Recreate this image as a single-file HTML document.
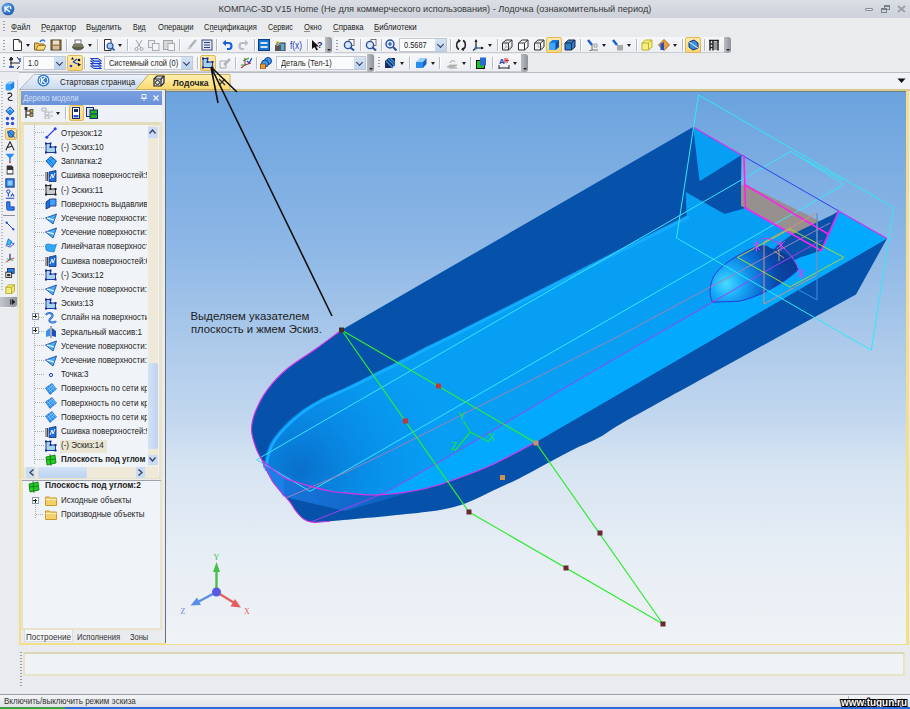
<!DOCTYPE html>
<html><head><meta charset="utf-8"><style>
*{box-sizing:border-box;margin:0;padding:0}
html,body{width:910px;height:709px;overflow:hidden;background:#e9ebee;font-family:"Liberation Sans",sans-serif;font-size:8px;color:#222}
.a{position:absolute}
.t{position:absolute;white-space:nowrap;line-height:1}
#title{left:0;top:0;width:910px;height:18px;background:linear-gradient(#dadee5,#cdd2da)}
#menu{left:0;top:18px;width:910px;height:19px;background:#e9ebed}
#tbarea{left:0;top:37px;width:910px;height:35px;background:#e9ebed}
.strip{position:absolute;background:linear-gradient(#f6f7f9,#eceef2);border-bottom:1px solid #c9cdd3;border-radius:0 2px 2px 0}
.grip{position:absolute;width:7px;background:linear-gradient(90deg,#b9bdc3,#8e939a);border-radius:0 3px 3px 0}.grip:after{content:'';position:absolute;left:1.5px;bottom:2px;width:0;height:0;border-left:2px solid transparent;border-right:2px solid transparent;border-top:2.5px solid #222}
.dots{position:absolute;width:2px;background:repeating-linear-gradient(#9aa0a8 0 1px,transparent 1px 3px)}
.sep{position:absolute;width:1px;height:12px;background:#b6bbc2;box-shadow:1px 0 0 #fff}
.dd{position:absolute;width:0;height:0;border-left:2.5px solid transparent;border-right:2.5px solid transparent;border-top:3px solid #222}
.combo{position:absolute;height:14px;background:#fafbfc;border:1px solid #c3c8cf;font-size:8.5px;padding:2px 0 0 5px}
.cbtn{position:absolute;top:0;right:0;width:11px;height:12px;background:linear-gradient(#d5e4f6,#bcd2ee);}
.cbtn:after{content:"";position:absolute;left:2.5px;top:3px;width:4px;height:4px;border-right:1.5px solid #335;border-bottom:1.5px solid #335;transform:rotate(45deg)}
.hl{position:absolute;background:linear-gradient(#fde9a8,#f9d57a);border:1px solid #e2b95a;border-radius:2px}
#tabs{left:19px;top:72px;width:891px;height:19px;background:#f0f2f5;border-top:1px solid #b9bdc3;border-bottom:2px solid #d8c98f}
#vtb{left:0;top:80px;width:18px;height:228px;background:#eef0f3;border-right:1px solid #d0d4da}
#tree{left:19px;top:90px;width:147px;height:555px;background:#e9ebee;border-left:2px solid #f1dc8c;border-bottom:2px solid #f1dc8c}
#vp{left:166px;top:91px;width:740px;height:553px;background:linear-gradient(#6ba3de 0%,#8db7e6 28%,#b2cdeb 49%,#c2d7ef 59%,#d7e4f2 68%,#e8eef5 85%,#eff2f6 100%)}
#cmd{left:23px;top:652px;width:882px;height:24px;background:#f0f3f6;border:2px solid #e8e2c8;border-top-color:#ddd6b6}
#status{left:0;top:694px;width:910px;height:15px;background:linear-gradient(#f4f5f7,#dcdfe3);border-top:1px solid #9da2a8}
.menu{font-size:8.2px;top:23.5px;color:#1a1a1a}
.ti{font-size:8.2px;color:#1a1a1a}
</style></head><body>
<div id="title" class="a"></div>
<svg class="a" style="left:1px;top:2px" width="14" height="14" viewBox="0 0 14 14"><defs><radialGradient id="lg" cx="0.4" cy="0.35" r="0.7"><stop offset="0" stop-color="#6fb4f0"/><stop offset="1" stop-color="#1456b0"/></radialGradient></defs><circle cx="7" cy="7" r="6.3" fill="url(#lg)"/><path d="M4,4 V10 M4,7 L8,4 M5,7 L9,10 M9,4 L10,7" stroke="#fff" stroke-width="1.2" fill="none"/></svg>
<div class="t" style="left:218.50px;top:4.61px;font-size:9.2px;color:#383838;">КОМПАС-3D V15 Home (Не для коммерческого использования) - Лодочка (ознакомительный период)</div>
<div class="a" style="left:865px;top:8px;width:8px;height:3px;border:1px solid #858b93;background:#e6e9ee;border-radius:1px"></div>
<div class="a" style="left:884px;top:5px;width:6px;height:5px;border:1px solid #7a8088;border-top-width:2px"></div><div class="a" style="left:881px;top:8px;width:6px;height:5px;border:1px solid #7a8088;border-top-width:2px;background:#d3d7de"></div>
<svg class="a" style="left:897px;top:5px" width="9" height="8"><path d="M1,1 L8,7 M8,1 L1,7" stroke="#9aa0a8" stroke-width="1.8"/></svg>
<div id="menu" class="a"></div>
<div class="dots" style="left:3px;top:21px;height:12px"></div>
<div class="t" style="left:11.40px;top:22.68px;font-size:9.0px;transform:scaleX(0.8768);transform-origin:left top;">Файл</div>
<div class="t" style="left:40.70px;top:22.68px;font-size:9.0px;transform:scaleX(0.9061);transform-origin:left top;">Редактор</div>
<div class="t" style="left:86.40px;top:22.68px;font-size:9.0px;transform:scaleX(0.8575);transform-origin:left top;">Выделить</div>
<div class="t" style="left:133.40px;top:22.68px;font-size:9.0px;transform:scaleX(0.7739);transform-origin:left top;">Вид</div>
<div class="t" style="left:157.80px;top:22.68px;font-size:9.0px;transform:scaleX(0.8456);transform-origin:left top;">Операции</div>
<div class="t" style="left:204.30px;top:22.68px;font-size:9.0px;transform:scaleX(0.8340);transform-origin:left top;">Спецификация</div>
<div class="t" style="left:268.00px;top:22.68px;font-size:9.0px;transform:scaleX(0.8080);transform-origin:left top;">Сервис</div>
<div class="t" style="left:304.30px;top:22.68px;font-size:9.0px;transform:scaleX(0.8416);transform-origin:left top;">Окно</div>
<div class="t" style="left:332.90px;top:22.68px;font-size:9.0px;transform:scaleX(0.8696);transform-origin:left top;">Справка</div>
<div class="t" style="left:374.40px;top:22.68px;font-size:9.0px;transform:scaleX(0.8737);transform-origin:left top;">Библиотеки</div>
<div class="a" style="left:11.4px;top:30.8px;width:6.0px;height:1px;background:#8a8a8a"></div>
<div class="a" style="left:40.7px;top:30.8px;width:5.4px;height:1px;background:#8a8a8a"></div>
<div class="a" style="left:91.5px;top:30.8px;width:5.5px;height:1px;background:#8a8a8a"></div>
<div class="a" style="left:138.0px;top:30.8px;width:3.9px;height:1px;background:#8a8a8a"></div>
<div class="a" style="left:184.9px;top:30.8px;width:4.3px;height:1px;background:#8a8a8a"></div>
<div class="a" style="left:209.7px;top:30.8px;width:4.1px;height:1px;background:#8a8a8a"></div>
<div class="a" style="left:273.3px;top:30.8px;width:4.0px;height:1px;background:#8a8a8a"></div>
<div class="a" style="left:304.3px;top:30.8px;width:5.9px;height:1px;background:#8a8a8a"></div>
<div class="a" style="left:332.9px;top:30.8px;width:5.7px;height:1px;background:#8a8a8a"></div>
<div class="a" style="left:374.4px;top:30.8px;width:5.2px;height:1px;background:#8a8a8a"></div>
<div id="tbarea" class="a"></div>
<div class="strip" style="left:0;top:37px;width:326px;height:16px"></div>
<div class="grip" style="left:325px;top:37px;height:16px"></div>
<div class="strip" style="left:334px;top:37px;width:391px;height:16px"></div>
<div class="grip" style="left:724px;top:37px;height:16px"></div>
<div class="dots" style="left:3px;top:40px;height:11px"></div>
<div class="dots" style="left:336px;top:40px;height:11px"></div>
<div class="strip" style="left:0;top:54px;width:368px;height:18px"></div>
<div class="grip" style="left:367px;top:54px;height:18px"></div>
<div class="strip" style="left:375px;top:54px;width:147px;height:18px"></div>
<div class="grip" style="left:521px;top:54px;height:18px"></div>
<div class="dots" style="left:3px;top:57px;height:12px"></div>
<div class="dots" style="left:378px;top:57px;height:12px"></div>
<svg class="a" style="left:11px;top:39px" width="12" height="12" viewBox="0 0 12 12"><path d="M2.5,0.5 H8 L10.5,3 V11.5 H2.5 Z" fill="#fff" stroke="#333"/><path d="M8,0.5 V3 H10.5" fill="none" stroke="#333"/></svg>
<svg class="a" style="left:34px;top:39px" width="12" height="12" viewBox="0 0 12 12"><path d="M0.5,4 H4 L5,5 H10 V11 H0.5 Z" fill="#e9c25a" stroke="#8a6a20"/><path d="M2,11 L4,6.5 H12 L10,11 Z" fill="#f7dc82" stroke="#8a6a20" stroke-width="0.8"/><path d="M6,3 C7,0.5 10,0.5 11,2.5" fill="none" stroke="#2a6ee8" stroke-width="1.5"/></svg>
<svg class="a" style="left:49.5px;top:39px" width="12" height="12" viewBox="0 0 12 12"><rect x="1" y="1" width="10" height="10" fill="#a4804a" stroke="#4a3a20"/><rect x="3" y="1.5" width="6" height="4" fill="#e8e0d0"/><rect x="3" y="7" width="6" height="3.5" fill="#d0c0a0"/></svg>
<svg class="a" style="left:72px;top:39px" width="12" height="12" viewBox="0 0 12 12"><rect x="3" y="1" width="6" height="4" fill="#fff" stroke="#555" stroke-width="0.8"/><ellipse cx="6" cy="8" rx="5.5" ry="3" fill="#5e5f48" stroke="#333" stroke-width="0.6"/><rect x="1" y="5" width="10" height="3" fill="#7a7b60"/></svg>
<svg class="a" style="left:102.5px;top:39px" width="12" height="12" viewBox="0 0 12 12"><path d="M1.5,0.5 H8 V11.5 H1.5 Z" fill="#fff" stroke="#333"/><circle cx="7" cy="7" r="3" fill="#a8c8f0" stroke="#2050b0" stroke-width="1.2"/><path d="M9,9 L11.5,11.5" stroke="#2050b0" stroke-width="1.6"/></svg>
<svg class="a" style="left:133px;top:39px" width="12" height="12" viewBox="0 0 12 12"><path d="M3,1 L8,9 M9,1 L4,9" stroke="#a0a4aa" stroke-width="1"/><circle cx="3.5" cy="10" r="1.5" fill="none" stroke="#a0a4aa"/><circle cx="8.5" cy="10" r="1.5" fill="none" stroke="#a0a4aa"/></svg>
<svg class="a" style="left:148px;top:39px" width="12" height="12" viewBox="0 0 12 12"><rect x="0.5" y="1.5" width="6" height="7" fill="#eee" stroke="#a8acb2"/><rect x="4.5" y="4.5" width="6.5" height="7" fill="#f4f4f4" stroke="#a8acb2"/></svg>
<svg class="a" style="left:163px;top:39px" width="12" height="12" viewBox="0 0 12 12"><rect x="0.5" y="1.5" width="9" height="9" fill="#d8d8d8" stroke="#a0a4aa"/><rect x="5" y="4.5" width="6.5" height="7" fill="#f4f4f4" stroke="#a8acb2"/></svg>
<svg class="a" style="left:186px;top:39px" width="12" height="12" viewBox="0 0 12 12"><path d="M1,11 L3,7 L6,9 Z" fill="#c8c8c8"/><path d="M4,8 L10,1" stroke="#b0b4b8" stroke-width="2.5"/></svg>
<svg class="a" style="left:201px;top:39px" width="12" height="12" viewBox="0 0 12 12"><rect x="1" y="1" width="10" height="10" fill="#dfe6f0" stroke="#354a7a"/><path d="M3,3.5 H9 M3,6 H9 M3,8.5 H9" stroke="#2a3f80" stroke-width="1.2"/></svg>
<svg class="a" style="left:222px;top:39px" width="12" height="12" viewBox="0 0 12 12"><path d="M3,4 H7 C10,4 10.5,10 7,10 H5" fill="none" stroke="#1a5ee0" stroke-width="2.2"/><path d="M0.5,4 L4,0.8 V7.2 Z" fill="#1a5ee0"/></svg>
<svg class="a" style="left:236.5px;top:39px" width="12" height="12" viewBox="0 0 12 12"><path d="M9,4 H5 C2,4 1.5,10 5,10 H7" fill="none" stroke="#b8bcc2" stroke-width="2.2"/><path d="M11.5,4 L8,0.8 V7.2 Z" fill="#b8bcc2"/></svg>
<svg class="a" style="left:258px;top:39px" width="12" height="12" viewBox="0 0 12 12"><rect x="0.5" y="0.5" width="11" height="11" fill="#1a74d0" stroke="#0a3a80"/><rect x="2.5" y="3" width="7" height="2" fill="#cfe6ff"/><rect x="2.5" y="7" width="7" height="2" fill="#cfe6ff"/></svg>
<svg class="a" style="left:273.5px;top:39px" width="12" height="12" viewBox="0 0 12 12"><rect x="3" y="4" width="8" height="8" fill="#60a8d0" stroke="#333"/><rect x="1" y="6" width="6" height="6" fill="#555"/><text x="1" y="7" font-size="8" font-weight="700" fill="#e8d020" font-family="Liberation Sans">?</text></svg>
<svg class="a" style="left:290px;top:39px" width="12" height="12" viewBox="0 0 12 12"><text x="0" y="10" font-size="10" fill="#1a3ab0" font-family="Liberation Sans" textLength="12" lengthAdjust="spacingAndGlyphs">f(x)</text></svg>
<svg class="a" style="left:311px;top:39px" width="12" height="12" viewBox="0 0 12 12"><path d="M1,1 L1,10 L3.5,8 L5.5,11.5 L7,10.5 L5,7.5 H8 Z" fill="#111"/><text x="6" y="9" font-size="9" font-weight="700" fill="#1a2a70" font-family="Liberation Sans">?</text></svg>
<svg class="a" style="left:343px;top:39px" width="12" height="12" viewBox="0 0 12 12"><rect x="6" y="0.5" width="5" height="6" fill="#fff" stroke="#555" stroke-width="0.8"/><circle cx="5" cy="6" r="3.6" fill="#d8e8f8" stroke="#2a50a0" stroke-width="1.4"/><path d="M7.5,8.5 L11,11.5" stroke="#2a50a0" stroke-width="2"/></svg>
<svg class="a" style="left:365px;top:39px" width="12" height="12" viewBox="0 0 12 12"><rect x="6" y="0.5" width="5" height="6" fill="#fff" stroke="#555" stroke-width="0.8"/><circle cx="5" cy="6" r="3.6" fill="#d8e8f8" stroke="#2a50a0" stroke-width="1.4"/><path d="M7.5,8.5 L11,11.5" stroke="#2a50a0" stroke-width="2"/></svg>
<svg class="a" style="left:385px;top:39px" width="12" height="12" viewBox="0 0 12 12"><circle cx="5" cy="5" r="4" fill="#d8e8f8" stroke="#2a50a0" stroke-width="1.4"/><path d="M8,8 L11.5,11.5" stroke="#2a50a0" stroke-width="2"/><path d="M3,5 H7 M5,3 V7" stroke="#2a50a0" stroke-width="1.2"/></svg>
<svg class="a" style="left:454.5px;top:39px" width="12" height="12" viewBox="0 0 12 12"><path d="M5,1.5 C1,2 0.5,9 4,10.5 M7,10.5 C11,10 11.5,3 8,1.5" fill="none" stroke="#222" stroke-width="1.5"/><path d="M3,0 L6,1.5 L3.5,4 Z M9,12 L6,10.5 L8.5,8 Z" fill="#222"/></svg>
<svg class="a" style="left:472px;top:39px" width="12" height="12" viewBox="0 0 12 12"><path d="M4,1 V9 H11 M4,9 L1,11.5" fill="none" stroke="#222" stroke-width="1.2"/><path d="M4,0 L2.5,3 H5.5 Z M12,9 L9,7.5 V10.5 Z" fill="#222"/><circle cx="4" cy="9" r="1.4" fill="#3060d0"/></svg>
<svg class="a" style="left:501px;top:39px" width="12" height="12" viewBox="0 0 12 12"><path d="M1.5,4 L5,1 H11 V8 L7.5,11 H1.5 Z M1.5,4 H7.5 V11 M7.5,4 L11,1" fill="none" stroke="#333"/><path d="M1.5,11 L5,8 H11 M5,1 V8" fill="none" stroke="#888" stroke-width="0.6"/></svg>
<svg class="a" style="left:517px;top:39px" width="12" height="12" viewBox="0 0 12 12"><path d="M1.5,4 L5,1 H11 V8 L7.5,11 H1.5 Z M1.5,4 H7.5 V11 M7.5,4 L11,1" fill="#fff" stroke="#333"/></svg>
<svg class="a" style="left:533px;top:39px" width="12" height="12" viewBox="0 0 12 12"><path d="M1.5,4 L5,1 H11 V8 L7.5,11 H1.5 Z M1.5,4 H7.5 V11 M7.5,4 L11,1" fill="#f0f0f0" stroke="#333"/><path d="M5,1 V8 H11" fill="none" stroke="#999" stroke-width="0.6"/></svg>
<svg class="a" style="left:563.5px;top:39px" width="12" height="12" viewBox="0 0 12 12"><path d="M1,4 L4.5,1 H11 V8 L7.5,11 H1 Z" fill="#3080c8" stroke="#1a2a50"/><path d="M1,4 H7.5 V11" fill="none" stroke="#1a2a50"/><path d="M7.5,4 L11,1" stroke="#1a2a50"/></svg>
<svg class="a" style="left:586.5px;top:39px" width="12" height="12" viewBox="0 0 12 12"><path d="M1,1 L5,6" stroke="#1a60d0" stroke-width="2.5"/><path d="M5,6 V11 H11 M5,11 L2,12" fill="none" stroke="#555" stroke-width="0.8"/><rect x="7" y="5" width="3" height="3" fill="none" stroke="#888" stroke-width="0.8"/></svg>
<svg class="a" style="left:612px;top:39px" width="12" height="12" viewBox="0 0 12 12"><path d="M1,1 L5,6" stroke="#1a60d0" stroke-width="2.5"/><rect x="5" y="6" width="6" height="5.5" fill="#aaa"/></svg>
<svg class="a" style="left:641px;top:39px" width="12" height="12" viewBox="0 0 12 12"><path d="M1,4 L4.5,1 H11 V8 L7.5,11 H1 Z" fill="#f6f08a" stroke="#c0b020"/><path d="M1,4 H7.5 V11 M7.5,4 L11,1" fill="none" stroke="#c0b020"/></svg>
<svg class="a" style="left:658px;top:39px" width="12" height="12" viewBox="0 0 12 12"><path d="M6,0.5 L11.5,6 L6,11.5 L0.5,6 Z" fill="#f0a030" stroke="#905010" stroke-width="0.8"/><path d="M2.5,11 V5 L6,3 V11 Z" fill="#2050d0"/></svg>
<svg class="a" style="left:708px;top:39px" width="12" height="12" viewBox="0 0 12 12"><path d="M1,1.5 H11 M2,1.5 V11.5 M5,1.5 V11.5 M10,1.5 V11.5 M2,5 H5 M2,8.5 H5" stroke="#222" stroke-width="1.5" fill="none"/><rect x="6" y="3" width="3" height="8" fill="#999"/></svg>
<div class="hl" style="left:546px;top:37px;width:16px;height:16px"></div>
<svg class="a" style="left:548px;top:39px" width="12" height="12" viewBox="0 0 12 12"><path d="M1,4 L4.5,1 H11 V8 L7.5,11 H1 Z" fill="#1a7ce0"/><path d="M1,4 H7.5 V11 H1 Z" fill="#40a8f8"/><path d="M7.5,4 L11,1 V8 L7.5,11 Z" fill="#1050b0"/></svg>
<div class="hl" style="left:685px;top:37px;width:16px;height:16px"></div>
<svg class="a" style="left:687px;top:39px" width="12" height="12" viewBox="0 0 12 12"><path d="M2,3 L7,1 L11,4 V9 L6,11 L2,8 Z" fill="#3a90e0" stroke="#10306a"/><path d="M2,3 L11,9" stroke="#f0f0f0" stroke-width="1"/></svg>
<div class="dd" style="left:25.5px;top:44px"></div>
<div class="dd" style="left:87.5px;top:44px"></div>
<div class="dd" style="left:117.5px;top:44px"></div>
<div class="dd" style="left:487.5px;top:44px"></div>
<div class="dd" style="left:602.0px;top:44px"></div>
<div class="dd" style="left:627.0px;top:44px"></div>
<div class="dd" style="left:673.2px;top:44px"></div>
<div class="sep" style="left:65.5px;top:39px;height:12px"></div>
<div class="sep" style="left:97.0px;top:39px;height:12px"></div>
<div class="sep" style="left:127.0px;top:39px;height:12px"></div>
<div class="sep" style="left:179.0px;top:39px;height:12px"></div>
<div class="sep" style="left:216.0px;top:39px;height:12px"></div>
<div class="sep" style="left:254.0px;top:39px;height:12px"></div>
<div class="sep" style="left:306.5px;top:39px;height:12px"></div>
<div class="sep" style="left:360.0px;top:39px;height:12px"></div>
<div class="sep" style="left:381.0px;top:39px;height:12px"></div>
<div class="sep" style="left:450.0px;top:39px;height:12px"></div>
<div class="sep" style="left:497.0px;top:39px;height:12px"></div>
<div class="sep" style="left:580.0px;top:39px;height:12px"></div>
<div class="sep" style="left:636.0px;top:39px;height:12px"></div>
<div class="sep" style="left:682.0px;top:39px;height:12px"></div>
<div class="sep" style="left:704.0px;top:39px;height:12px"></div>
<div class="combo" style="left:399px;top:38px;width:48px;height:14px"><div class="cbtn"></div></div><div class="a" style="left:400px;top:38px;width:36px;height:14px;overflow:hidden"><div class="t" style="left:4.00px;top:2.98px;font-size:9.0px;transform:scaleX(0.8267);transform-origin:left top;">0.5687</div></div>
<svg class="a" style="left:9px;top:57px" width="12" height="12" viewBox="0 0 12 12"><path d="M2,11 V2 M2,0 L0.5,3 H3.5 Z M2,0 L4,2" fill="#222" stroke="#222" stroke-width="1"/><path d="M8,0 L10.5,3 M8,12 L10.5,9 M1,6 L11,6" stroke="#222" fill="none"/><path d="M0,10 H5 M11,1 V5" stroke="#1a40c0" stroke-width="1.3"/></svg>
<svg class="a" style="left:90px;top:57px" width="12" height="12" viewBox="0 0 12 12"><path d="M0.5,9 L4,11.5 H11.5 L8,9 Z" fill="#c8dcf8" stroke="#1a3ad0"/><path d="M0.5,6.5 L4,9 H11.5 L8,6.5 Z" fill="#c8dcf8" stroke="#1a3ad0"/><path d="M0.5,4 L4,6.5 H11.5 L8,4 Z" fill="#c8dcf8" stroke="#1a3ad0"/><path d="M0.5,1.5 L4,4 H11.5 L8,1.5 Z" fill="#c8dcf8" stroke="#1a3ad0"/></svg>
<svg class="a" style="left:218.5px;top:57px" width="12" height="12" viewBox="0 0 12 12"><path d="M1,4 H7 V11 H1 Z" fill="#f4f4f4" stroke="#a0a4aa"/><path d="M5,8 L11,2" stroke="#b0b4b8" stroke-width="2.5"/></svg>
<svg class="a" style="left:239.5px;top:57px" width="12" height="12" viewBox="0 0 12 12"><path d="M5,1 V8 L1,11 M5,8 L11,6" fill="none" stroke="#c03030" stroke-width="1.1"/><path d="M1,8 H6 M3,4 L9,1" fill="none" stroke="#20a040" stroke-width="1.1"/><path d="M7,4 L9,6 L12,1" fill="none" stroke="#1a40d0" stroke-width="1.3"/></svg>
<svg class="a" style="left:260px;top:57px" width="12" height="12" viewBox="0 0 12 12"><circle cx="8" cy="4" r="3.5" fill="#3a9ae8" stroke="#1a3a90"/><circle cx="5" cy="6.5" r="3.5" fill="#3a9ae8" stroke="#1a3a90"/><rect x="0.5" y="7" width="5" height="5" fill="#e89a40" stroke="#905010" stroke-width="0.8"/></svg>
<svg class="a" style="left:384px;top:57px" width="12" height="12" viewBox="0 0 12 12"><path d="M1,4 L4.5,1 H11 V8 L7.5,11 H1 Z" fill="#1a2a60"/><path d="M2,4 L9,11 M4,2 L11,9 M6,1 L11,6" stroke="#3a9ae0" stroke-width="1.3"/></svg>
<svg class="a" style="left:415px;top:57px" width="12" height="12" viewBox="0 0 12 12"><path d="M1,5 L5,1 H11.5 L8,5 Z" fill="#9ad0ff"/><path d="M1,5 H8 V11 H1 Z" fill="#2a8ef0"/><path d="M8,5 L11.5,1 V7 L8,11 Z" fill="#1a60c0"/></svg>
<svg class="a" style="left:446px;top:57px" width="12" height="12" viewBox="0 0 12 12"><path d="M4,6 C5,3 8,3 9,5" fill="none" stroke="#999"/><path d="M1,10 L4,8 H11 L8,10 Z" fill="#bbb" stroke="#999" stroke-width="0.6"/><path d="M3,11 H11" stroke="#999"/></svg>
<svg class="a" style="left:475px;top:57px" width="12" height="12" viewBox="0 0 12 12"><rect x="1" y="3" width="9" height="9" fill="#111"/><rect x="2" y="4" width="7" height="7" fill="#20c020"/><rect x="5" y="0.5" width="6" height="8" fill="#2a6ad0"/></svg>
<svg class="a" style="left:498px;top:57px" width="12" height="12" viewBox="0 0 12 12"><path d="M1,11 H11 M1,8 V12 M11,8 V12" stroke="#222"/><text x="1" y="7" font-size="8" font-weight="700" fill="#2040c0" font-family="Liberation Sans">A</text><path d="M7,1 V6 M9,1 V6 M7,3.5 H11" stroke="#d02020"/></svg>
<div class="hl" style="left:67px;top:55px;width:16px;height:16px"></div>
<svg class="a" style="left:69px;top:57px" width="12" height="12" viewBox="0 0 12 12"><path d="M4,5 L8,2 M4,5 L11,8" stroke="#1a40d0" stroke-width="1.3"/><path d="M3.5,0 L5,2.5 L2,2.5 Z M9,6 L12,7.5 L9,9.5 Z" fill="#111"/><circle cx="2" cy="9" r="1.3" fill="#1a40d0"/><circle cx="10" cy="3" r="1.3" fill="#111"/></svg>
<div class="hl" style="left:200px;top:55px;width:16px;height:16px"></div>
<svg class="a" style="left:202px;top:57px" width="12" height="12" viewBox="0 0 12 12"><path d="M1,1.5 H5.5 V5 H10.5 V10.5 H1 Z" fill="#a8d4e8" stroke="#1a3ab0" stroke-width="1"/><g fill="#1a2a90"><rect x="0" y="0.5" width="2" height="2"/><rect x="4.5" y="0.5" width="2" height="2"/><rect x="4.5" y="4" width="2" height="2"/><rect x="9.5" y="4" width="2" height="2"/><rect x="0" y="9.5" width="2" height="2"/><rect x="9.5" y="9.5" width="2" height="2"/></g></svg>
<div class="sep" style="left:84.4px;top:57px;height:12px"></div>
<div class="sep" style="left:197.0px;top:57px;height:12px"></div>
<div class="sep" style="left:235.0px;top:57px;height:12px"></div>
<div class="sep" style="left:256.0px;top:57px;height:12px"></div>
<div class="sep" style="left:409.0px;top:57px;height:12px"></div>
<div class="sep" style="left:439.0px;top:57px;height:12px"></div>
<div class="sep" style="left:470.0px;top:57px;height:12px"></div>
<div class="sep" style="left:492.0px;top:57px;height:12px"></div>
<div class="dd" style="left:400.0px;top:62px"></div>
<div class="dd" style="left:430.5px;top:62px"></div>
<div class="dd" style="left:461.5px;top:62px"></div>
<div class="dd" style="left:513.0px;top:62px"></div>
<div class="combo" style="left:23px;top:56px;width:43px;height:14px"><div class="cbtn"></div></div><div class="a" style="left:24px;top:56px;width:31px;height:14px;overflow:hidden"><div class="t" style="left:4.00px;top:2.98px;font-size:9.0px;transform:scaleX(0.8267);transform-origin:left top;">1.0</div></div>
<div class="combo" style="left:104px;top:56px;width:89px;height:14px"><div class="cbtn"></div></div><div class="a" style="left:105px;top:56px;width:77px;height:14px;overflow:hidden"><div class="t" style="left:4.00px;top:2.98px;font-size:9.0px;transform:scaleX(0.8267);transform-origin:left top;">Системный слой (0)</div></div>
<div class="combo" style="left:275.5px;top:56px;width:90.5px;height:14px"><div class="cbtn"></div></div><div class="a" style="left:276.5px;top:56px;width:78.5px;height:14px;overflow:hidden"><div class="t" style="left:4.00px;top:2.98px;font-size:9.0px;transform:scaleX(0.8267);transform-origin:left top;">Деталь (Тел-1)</div></div>
<div id="tabs" class="a"></div>
<svg class="a" style="left:19px;top:72px" width="220" height="18" viewBox="0 0 220 18"><defs><linearGradient id="tg1" x1="0" y1="0" x2="0" y2="1"><stop offset="0" stop-color="#eef3fa"/><stop offset="1" stop-color="#c9d9ee"/></linearGradient><linearGradient id="tg2" x1="0" y1="0" x2="0" y2="1"><stop offset="0" stop-color="#fff0b0"/><stop offset="1" stop-color="#fbd870"/></linearGradient></defs><path d="M0.5,17.5 L15,2.5 H129.6 L117,17.5 Z" fill="url(#tg1)" stroke="#a9b6c8"/><path d="M117,17.5 L129.6,2.5 H211 V17.5 Z" fill="url(#tg2)" stroke="#c8b060"/></svg>
<svg class="a" style="left:37px;top:74px" width="13" height="13" viewBox="0 0 13 13"><circle cx="6.5" cy="6.5" r="6" fill="#2a7ad8"/><circle cx="6.5" cy="6.5" r="4.2" fill="none" stroke="#fff" stroke-width="1"/><path d="M4.5,3.5 V9.5 M4.5,6.5 L8,3.5 M5.5,6.5 L8.5,9.5" stroke="#fff" stroke-width="1.2" fill="none"/></svg>
<div class="t" style="left:59.50px;top:77.68px;font-size:9.0px;transform:scaleX(0.8814);transform-origin:left top;">Стартовая страница</div>
<svg class="a" style="left:153px;top:75px" width="12" height="12" viewBox="0 0 12 12"><path d="M1,4 L4,1 H11 V8 L8,11 H1 Z" fill="#ddd" stroke="#222" stroke-width="1.2"/><path d="M1,4 H8 V11 M8,4 L11,1" fill="none" stroke="#222" stroke-width="1.2"/><circle cx="4.5" cy="7.5" r="2" fill="none" stroke="#222"/></svg>
<div class="t" style="left:172.80px;top:78.92px;font-size:8.6px;font-weight:700;">Лодочка</div>
<svg class="a" style="left:218px;top:78px" width="8" height="8" viewBox="0 0 8 8"><path d="M1,1 L7,7 M7,1 L1,7" stroke="#333" stroke-width="1.4"/></svg>
<svg class="a" style="left:897px;top:78px" width="9" height="6" viewBox="0 0 9 6"><path d="M0.5,0.5 H8.5 L4.5,5 Z" fill="#111"/></svg>
<div id="vtb" class="a"></div>
<div class="a" style="left:1px;top:82px;width:2px;height:210px;background:repeating-linear-gradient(#b8bcc2 0 1px,transparent 1px 3px)"></div>
<svg class="a" style="left:5px;top:81px" width="10" height="10" viewBox="0 0 12 12"><path d="M1,4 L5,1 H11 V8 L7,11 H1 Z" fill="#1a80e8"/><path d="M1,4 H7 V11 H1 Z" fill="#2aa0ff"/><path d="M1,4 L5,1 H11 L7,4 Z" fill="#8ad0ff"/></svg>
<svg class="a" style="left:5px;top:92px" width="10" height="10" viewBox="0 0 12 12"><path d="M3,2 C8,0 10,4 6,6 C2,8 4,11 9,10" fill="none" stroke="#222" stroke-width="1.3"/></svg>
<svg class="a" style="left:5px;top:106px" width="10" height="10" viewBox="0 0 12 12"><path d="M6,1 L11,6 L6,11 L1,6 Z" fill="#2a90f0" stroke="#1a4ab0"/><path d="M3,6 L6,3 L9,6" stroke="#fff" fill="none"/></svg>
<svg class="a" style="left:5px;top:116px" width="10" height="10" viewBox="0 0 12 12"><circle cx="3" cy="3" r="2" fill="#2a50e0"/><circle cx="9" cy="3" r="2" fill="#2a50e0"/><circle cx="3" cy="9" r="2" fill="#2a50e0"/><circle cx="9" cy="9" r="2" fill="#2a50e0"/></svg>
<svg class="a" style="left:5px;top:141px" width="10" height="10" viewBox="0 0 12 12"><path d="M1,11 L6,1 L11,11 M2,8 L9,6" fill="none" stroke="#222" stroke-width="1.3"/></svg>
<svg class="a" style="left:5px;top:153px" width="10" height="10" viewBox="0 0 12 12"><path d="M0.5,1 H11.5 L7,6 V9 L5,11 V6 Z" fill="#2a90f0"/><rect x="5" y="10" width="2" height="2" fill="#e03020"/></svg>
<svg class="a" style="left:5px;top:165px" width="10" height="10" viewBox="0 0 12 12"><path d="M2,0.5 H8 L10,2.5 V11.5 H2 Z" fill="#333"/><rect x="3" y="6" width="6" height="4" fill="#fff"/></svg>
<svg class="a" style="left:5px;top:178px" width="10" height="10" viewBox="0 0 12 12"><rect x="1" y="1" width="10" height="10" fill="#2a80e8" stroke="#1a2a70"/><rect x="3" y="3" width="6" height="6" fill="#8ac8ff"/></svg>
<svg class="a" style="left:5px;top:189px" width="10" height="10" viewBox="0 0 12 12"><circle cx="4" cy="3" r="2" fill="none" stroke="#1a40d0" stroke-width="1.2"/><path d="M4,5 V9 M1,11 H11 M7,9 L9,6 L11,9" stroke="#1a40d0" stroke-width="1.3" fill="none"/></svg>
<svg class="a" style="left:5px;top:201px" width="10" height="10" viewBox="0 0 12 12"><path d="M2,1 H6 V7 H11 V11 H4 C2,11 2,10 2,8 Z" fill="#2a80e8" stroke="#1a3ab0"/></svg>
<svg class="a" style="left:5px;top:221px" width="10" height="10" viewBox="0 0 12 12"><path d="M1,1 L11,11" stroke="#1a40d0" stroke-width="1.2"/><circle cx="2" cy="2" r="1.3" fill="#1a40d0"/><circle cx="10" cy="10" r="1.3" fill="#1a40d0"/></svg>
<svg class="a" style="left:5px;top:238px" width="10" height="10" viewBox="0 0 12 12"><path d="M1,9 L6,11 L11,7 L6,5 Z" fill="none" stroke="#1a40d0"/><path d="M2,7 L4,1 L8,4 L6,9 Z" fill="#30c0f0" stroke="#1a40d0" stroke-width="0.7"/></svg>
<svg class="a" style="left:5px;top:253px" width="10" height="10" viewBox="0 0 12 12"><path d="M6,1 V8 L1,11 M6,8 L11,6" fill="none" stroke="#c03030" stroke-width="1.1"/><path d="M2,7 L10,9" stroke="#20a040"/><path d="M6,1 L6,8" stroke="#1a40d0" stroke-width="1.1"/></svg>
<svg class="a" style="left:5px;top:268px" width="10" height="10" viewBox="0 0 12 12"><rect x="3" y="0.5" width="8" height="6" fill="#2a80e8" stroke="#1a2a70"/><rect x="1" y="5" width="7" height="6.5" fill="#fff" stroke="#111"/><rect x="2.5" y="7" width="4" height="3" fill="#333"/></svg>
<svg class="a" style="left:5px;top:284px" width="10" height="10" viewBox="0 0 12 12"><path d="M1,4 L4.5,1 H11.5 V8.5 L8,11.5 H1 Z" fill="#f3ec78" stroke="#b0a020"/><path d="M1,4 H8 V11.5 M8,4 L11.5,1" fill="none" stroke="#b0a020"/></svg>
<div class="hl" style="left:5px;top:128px;width:12px;height:12px"></div>
<svg class="a" style="left:6px;top:129px" width="10" height="10" viewBox="0 0 13 12"><path d="M2,3 L7,1 L11,4 L9,10 L4,10 Z" fill="#3a9ae8" stroke="#1a3a90"/><path d="M2,2 L12,11" stroke="#1a40d0" stroke-width="1"/></svg>
<div class="a" style="left:3px;top:215px;width:12px;height:1px;background:#8a9098"></div>
<div class="a" style="left:0;top:297px;width:17px;height:10px;background:linear-gradient(90deg,#c4c8ce,#8e939a);border-radius:0 0 3px 0"></div>
<svg class="a" style="left:10px;top:299px" width="6" height="6" viewBox="0 0 6 6"><path d="M0.5,0.5 V5.5 M2,0.5 L5,3 L2,5.5 Z" stroke="#222" fill="#222" stroke-width="0.8"/></svg>
<div class="a" style="left:19px;top:90px;width:147px;height:555px;background:#e9ebee"></div>
<div class="a" style="left:19px;top:90px;width:2px;height:555px;background:#f3de8a"></div>
<div class="a" style="left:19px;top:643px;width:147px;height:2px;background:#f3de8a"></div>
<div class="a" style="left:165px;top:90px;width:1px;height:553px;background:#6c7076"></div>
<div class="a" style="left:21px;top:91px;width:141px;height:13.5px;background:linear-gradient(#7aa0e0,#6a92d8)"></div>
<div class="t" style="left:23.00px;top:94.56px;font-size:8.2px;color:#d3e0f6;transform:scaleX(0.9458);transform-origin:left top;">Дерево модели</div>
<svg class="a" style="left:141px;top:94px" width="6" height="7" viewBox="0 0 6 7"><path d="M1,0.5 H5 V4 H1 Z M0,4.5 H6 M3,4.5 V7" stroke="#e8eefa" fill="none" stroke-width="1"/></svg>
<svg class="a" style="left:153px;top:95px" width="6" height="6" viewBox="0 0 6 6"><path d="M0.5,0.5 L5.5,5.5 M5.5,0.5 L0.5,5.5" stroke="#f0f4fc" stroke-width="1.3"/></svg>
<div class="a" style="left:21px;top:104.5px;width:141px;height:17px;background:#eef1f5"></div>
<svg class="a" style="left:24px;top:107px" width="12" height="12" viewBox="0 0 12 12"><path d="M2,1 V11 M2,4 H6 M2,8 H6" stroke="#222" stroke-width="1.2" fill="none"/><rect x="0.5" y="0" width="3" height="3" fill="#222"/><rect x="6" y="2.5" width="3" height="3" fill="#c8a040" stroke="#222" stroke-width="0.6"/><rect x="6" y="6.5" width="3" height="3" fill="#c8a040" stroke="#222" stroke-width="0.6"/></svg>
<svg class="a" style="left:41px;top:107px" width="12" height="12" viewBox="0 0 12 12"><path d="M1,1 H5 V4 H1 Z M4,5 H8 V8 H4 Z M4,9 H8 V12 H4 Z M9,5 H12 M9,9 H12" fill="none" stroke="#a8acb2" stroke-width="0.9"/></svg>
<div class="dd" style="left:56.1px;top:112px"></div>
<div class="sep" style="left:64.6px;top:107px;height:12px"></div>
<div class="hl" style="left:69px;top:105px;width:15px;height:16px"></div>
<svg class="a" style="left:70px;top:107px" width="12" height="12" viewBox="0 0 12 12"><rect x="2.5" y="0.5" width="7" height="11" fill="#fff" stroke="#1a2a70"/><rect x="4" y="2" width="4" height="3" fill="#1a2a70"/><rect x="3.5" y="8" width="5" height="2.5" fill="#2a5ad0"/></svg>
<svg class="a" style="left:86px;top:107px" width="12" height="12" viewBox="0 0 12 12"><rect x="0.5" y="0.5" width="7" height="9" fill="#d8e0f0" stroke="#1a2a70"/><rect x="4" y="3" width="7.5" height="8.5" fill="#20b020" stroke="#1a2a70"/><path d="M5,7 H11" stroke="#1a2a70"/></svg>
<div class="a" style="left:21px;top:122px;width:141px;height:357px;background:#f0f3f7;border:3px solid #e9e3c9;border-top-color:#e3dcbc"></div>
<div class="a" style="left:34px;top:125px;width:1px;height:340px;background:repeating-linear-gradient(#a8acb0 0 1px,transparent 1px 2px)"></div>
<div class="a" style="left:59.8px;top:439.7px;width:47.5px;height:13.2px;background:#ebe5d3"></div>
<div class="a" style="left:23px;top:125px;width:124px;height:341px;overflow:hidden">
<div class="a" style="left:12px;top:7.4px;width:9px;height:1px;background:repeating-linear-gradient(90deg,#a8acb0 0 1px,transparent 1px 2px)"></div>
<svg class="a" style="left:22px;top:2px" width="12" height="12" viewBox="0 0 12 12"><path d="M1.5,10.5 L10.5,1.5" stroke="#2a40e0" stroke-width="1.1"/><circle cx="1.8" cy="10.2" r="1.5" fill="#2a40e0"/><circle cx="10.2" cy="1.8" r="1.5" fill="#2a40e0"/></svg>
<div class="t" style="left:37.80px;top:3.78px;font-size:9.0px;transform:scaleX(0.8889);transform-origin:left top;">Отрезок:12</div>
<div class="a" style="left:12px;top:21.6px;width:9px;height:1px;background:repeating-linear-gradient(90deg,#a8acb0 0 1px,transparent 1px 2px)"></div>
<svg class="a" style="left:22px;top:17px" width="12" height="12" viewBox="0 0 12 12"><path d="M1,1.5 H5.5 V5 H10.5 V10.5 H1 Z" fill="#a8d4e8" stroke="#1a3ab0" stroke-width="1"/><g fill="#1a2a90"><rect x="0" y="0.5" width="2" height="2"/><rect x="4.5" y="0.5" width="2" height="2"/><rect x="4.5" y="4" width="2" height="2"/><rect x="9.5" y="4" width="2" height="2"/><rect x="0" y="9.5" width="2" height="2"/><rect x="9.5" y="9.5" width="2" height="2"/></g></svg>
<div class="t" style="left:37.80px;top:17.98px;font-size:9.0px;transform:scaleX(0.8889);transform-origin:left top;">(-) Эскиз:10</div>
<div class="a" style="left:12px;top:35.8px;width:9px;height:1px;background:repeating-linear-gradient(90deg,#a8acb0 0 1px,transparent 1px 2px)"></div>
<svg class="a" style="left:22px;top:31px" width="12" height="12" viewBox="0 0 12 12"><path d="M1,5 L6,0.5 L11.5,5 L7,11.5 Z" fill="#30a8f8" stroke="#1a50c0"/><path d="M3,3 L9,9 M8,2 L3,8" stroke="#1a70e0" stroke-width="0.8"/></svg>
<div class="t" style="left:37.80px;top:32.18px;font-size:9.0px;transform:scaleX(0.8889);transform-origin:left top;">Заплатка:2</div>
<div class="a" style="left:12px;top:50.0px;width:9px;height:1px;background:repeating-linear-gradient(90deg,#a8acb0 0 1px,transparent 1px 2px)"></div>
<svg class="a" style="left:22px;top:45px" width="12" height="12" viewBox="0 0 12 12"><path d="M1,2 V11 M2.5,2 V11" stroke="#333" stroke-width="0.9"/><path d="M4,2 L11,0.5 V11.5 H4 Z" fill="#1a70e0" stroke="#1a2a70" stroke-width="0.8"/><path d="M5,9 L7,4 L8,8 L10,3" stroke="#fff" fill="none" stroke-width="0.9"/></svg>
<div class="t" style="left:37.80px;top:46.38px;font-size:9.0px;transform:scaleX(0.8889);transform-origin:left top;">Сшивка поверхностей:5</div>
<div class="a" style="left:12px;top:64.2px;width:9px;height:1px;background:repeating-linear-gradient(90deg,#a8acb0 0 1px,transparent 1px 2px)"></div>
<svg class="a" style="left:22px;top:59px" width="12" height="12" viewBox="0 0 12 12"><path d="M1,1.5 H5.5 V5 H10.5 V10.5 H1 Z" fill="#c8cccc" stroke="#333" stroke-width="1"/><g fill="#222"><rect x="0" y="0.5" width="2" height="2"/><rect x="4.5" y="0.5" width="2" height="2"/><rect x="4.5" y="4" width="2" height="2"/><rect x="9.5" y="4" width="2" height="2"/><rect x="0" y="9.5" width="2" height="2"/><rect x="9.5" y="9.5" width="2" height="2"/></g></svg>
<div class="t" style="left:37.80px;top:60.58px;font-size:9.0px;transform:scaleX(0.8889);transform-origin:left top;">(-) Эскиз:11</div>
<div class="a" style="left:12px;top:78.4px;width:9px;height:1px;background:repeating-linear-gradient(90deg,#a8acb0 0 1px,transparent 1px 2px)"></div>
<svg class="a" style="left:22px;top:73px" width="12" height="12" viewBox="0 0 12 12"><path d="M1,4 L5,1 V9 L1,11 Z" fill="#1a70e0" stroke="#1a2a70" stroke-width="0.8"/><path d="M5,1 H11 V8 H5" fill="#40a0f8" stroke="#1a2a70" stroke-width="0.8"/></svg>
<div class="t" style="left:37.80px;top:74.78px;font-size:9.0px;transform:scaleX(0.8889);transform-origin:left top;">Поверхность выдавлив</div>
<div class="a" style="left:12px;top:92.6px;width:9px;height:1px;background:repeating-linear-gradient(90deg,#a8acb0 0 1px,transparent 1px 2px)"></div>
<svg class="a" style="left:22px;top:88px" width="12" height="12" viewBox="0 0 12 12"><path d="M0.5,5 L11.5,1 L8,11 Z" fill="#40b0ff" stroke="#1a3a90" stroke-width="0.8"/><path d="M2,5 L9,7" stroke="#fff" stroke-width="1.2"/></svg>
<div class="t" style="left:37.80px;top:88.98px;font-size:9.0px;transform:scaleX(0.8889);transform-origin:left top;">Усечение поверхности:</div>
<div class="a" style="left:12px;top:106.8px;width:9px;height:1px;background:repeating-linear-gradient(90deg,#a8acb0 0 1px,transparent 1px 2px)"></div>
<svg class="a" style="left:22px;top:102px" width="12" height="12" viewBox="0 0 12 12"><path d="M0.5,5 L11.5,1 L8,11 Z" fill="#40b0ff" stroke="#1a3a90" stroke-width="0.8"/><path d="M2,5 L9,7" stroke="#fff" stroke-width="1.2"/></svg>
<div class="t" style="left:37.80px;top:103.18px;font-size:9.0px;transform:scaleX(0.8889);transform-origin:left top;">Усечение поверхности:</div>
<div class="a" style="left:12px;top:121.0px;width:9px;height:1px;background:repeating-linear-gradient(90deg,#a8acb0 0 1px,transparent 1px 2px)"></div>
<svg class="a" style="left:22px;top:116px" width="12" height="12" viewBox="0 0 12 12"><path d="M0.5,4 C4,1 8,6 11.5,3 L9,11 C6,10 3,11 1,9 Z" fill="#30a8f8" stroke="#1a60c0" stroke-width="0.6"/></svg>
<div class="t" style="left:37.80px;top:117.38px;font-size:9.0px;transform:scaleX(0.8889);transform-origin:left top;">Линейчатая поверхност</div>
<div class="a" style="left:12px;top:135.2px;width:9px;height:1px;background:repeating-linear-gradient(90deg,#a8acb0 0 1px,transparent 1px 2px)"></div>
<svg class="a" style="left:22px;top:130px" width="12" height="12" viewBox="0 0 12 12"><path d="M1,2 V11 M2.5,2 V11" stroke="#333" stroke-width="0.9"/><path d="M4,2 L11,0.5 V11.5 H4 Z" fill="#1a70e0" stroke="#1a2a70" stroke-width="0.8"/><path d="M5,9 L7,4 L8,8 L10,3" stroke="#fff" fill="none" stroke-width="0.9"/></svg>
<div class="t" style="left:37.80px;top:131.58px;font-size:9.0px;transform:scaleX(0.8889);transform-origin:left top;">Сшивка поверхностей:6</div>
<div class="a" style="left:12px;top:149.4px;width:9px;height:1px;background:repeating-linear-gradient(90deg,#a8acb0 0 1px,transparent 1px 2px)"></div>
<svg class="a" style="left:22px;top:144px" width="12" height="12" viewBox="0 0 12 12"><path d="M1,1.5 H5.5 V5 H10.5 V10.5 H1 Z" fill="#a8d4e8" stroke="#1a3ab0" stroke-width="1"/><g fill="#1a2a90"><rect x="0" y="0.5" width="2" height="2"/><rect x="4.5" y="0.5" width="2" height="2"/><rect x="4.5" y="4" width="2" height="2"/><rect x="9.5" y="4" width="2" height="2"/><rect x="0" y="9.5" width="2" height="2"/><rect x="9.5" y="9.5" width="2" height="2"/></g></svg>
<div class="t" style="left:37.80px;top:145.78px;font-size:9.0px;transform:scaleX(0.8889);transform-origin:left top;">(-) Эскиз:12</div>
<div class="a" style="left:12px;top:163.6px;width:9px;height:1px;background:repeating-linear-gradient(90deg,#a8acb0 0 1px,transparent 1px 2px)"></div>
<svg class="a" style="left:22px;top:159px" width="12" height="12" viewBox="0 0 12 12"><path d="M0.5,5 L11.5,1 L8,11 Z" fill="#40b0ff" stroke="#1a3a90" stroke-width="0.8"/><path d="M2,5 L9,7" stroke="#fff" stroke-width="1.2"/></svg>
<div class="t" style="left:37.80px;top:159.98px;font-size:9.0px;transform:scaleX(0.8889);transform-origin:left top;">Усечение поверхности:</div>
<div class="a" style="left:12px;top:177.8px;width:9px;height:1px;background:repeating-linear-gradient(90deg,#a8acb0 0 1px,transparent 1px 2px)"></div>
<svg class="a" style="left:22px;top:173px" width="12" height="12" viewBox="0 0 12 12"><path d="M1,1.5 H5.5 V5 H10.5 V10.5 H1 Z" fill="#a8d4e8" stroke="#1a3ab0" stroke-width="1"/><g fill="#1a2a90"><rect x="0" y="0.5" width="2" height="2"/><rect x="4.5" y="0.5" width="2" height="2"/><rect x="4.5" y="4" width="2" height="2"/><rect x="9.5" y="4" width="2" height="2"/><rect x="0" y="9.5" width="2" height="2"/><rect x="9.5" y="9.5" width="2" height="2"/></g></svg>
<div class="t" style="left:37.80px;top:174.18px;font-size:9.0px;transform:scaleX(0.8889);transform-origin:left top;">Эскиз:13</div>
<div class="a" style="left:12px;top:192.0px;width:9px;height:1px;background:repeating-linear-gradient(90deg,#a8acb0 0 1px,transparent 1px 2px)"></div>
<svg class="a" style="left:22px;top:187px" width="12" height="12" viewBox="0 0 12 12"><path d="M1,3 C3,-1 11,2 6,6 C1,10 9,12 11,9" fill="none" stroke="#1a50c0" stroke-width="2"/><path d="M1,3 C3,-1 11,2 6,6 C1,10 9,12 11,9" fill="none" stroke="#60c0ff" stroke-width="0.8"/></svg>
<div class="a" style="left:8.5px;top:187.5px;width:7px;height:7px;border:1px solid #8a9aae;background:#fff"></div>
<div class="a" style="left:10px;top:190.5px;width:4px;height:1px;background:#222"></div><div class="a" style="left:11.5px;top:189.0px;width:1px;height:4px;background:#222"></div>
<div class="t" style="left:37.80px;top:188.38px;font-size:9.0px;transform:scaleX(0.8889);transform-origin:left top;">Сплайн на поверхности</div>
<div class="a" style="left:12px;top:206.2px;width:9px;height:1px;background:repeating-linear-gradient(90deg,#a8acb0 0 1px,transparent 1px 2px)"></div>
<svg class="a" style="left:22px;top:201px" width="12" height="12" viewBox="0 0 12 12"><path d="M6,0 V12" stroke="#333" stroke-width="0.8"/><path d="M1,5 L5,2 V10 L1,11 Z" fill="#3a90f0"/><path d="M7,2 L11,5 V11 L7,10 Z" fill="#1a50c0"/></svg>
<div class="a" style="left:8.5px;top:201.7px;width:7px;height:7px;border:1px solid #8a9aae;background:#fff"></div>
<div class="a" style="left:10px;top:204.7px;width:4px;height:1px;background:#222"></div><div class="a" style="left:11.5px;top:203.2px;width:1px;height:4px;background:#222"></div>
<div class="t" style="left:37.80px;top:202.58px;font-size:9.0px;transform:scaleX(0.8889);transform-origin:left top;">Зеркальный массив:1</div>
<div class="a" style="left:12px;top:220.4px;width:9px;height:1px;background:repeating-linear-gradient(90deg,#a8acb0 0 1px,transparent 1px 2px)"></div>
<svg class="a" style="left:22px;top:215px" width="12" height="12" viewBox="0 0 12 12"><path d="M0.5,5 L11.5,1 L8,11 Z" fill="#40b0ff" stroke="#1a3a90" stroke-width="0.8"/><path d="M2,5 L9,7" stroke="#fff" stroke-width="1.2"/></svg>
<div class="t" style="left:37.80px;top:216.78px;font-size:9.0px;transform:scaleX(0.8889);transform-origin:left top;">Усечение поверхности:</div>
<div class="a" style="left:12px;top:234.6px;width:9px;height:1px;background:repeating-linear-gradient(90deg,#a8acb0 0 1px,transparent 1px 2px)"></div>
<svg class="a" style="left:22px;top:230px" width="12" height="12" viewBox="0 0 12 12"><path d="M0.5,5 L11.5,1 L8,11 Z" fill="#40b0ff" stroke="#1a3a90" stroke-width="0.8"/><path d="M2,5 L9,7" stroke="#fff" stroke-width="1.2"/></svg>
<div class="t" style="left:37.80px;top:230.98px;font-size:9.0px;transform:scaleX(0.8889);transform-origin:left top;">Усечение поверхности:</div>
<div class="a" style="left:12px;top:248.8px;width:9px;height:1px;background:repeating-linear-gradient(90deg,#a8acb0 0 1px,transparent 1px 2px)"></div>
<svg class="a" style="left:22px;top:244px" width="12" height="12" viewBox="0 0 12 12"><circle cx="6" cy="6" r="1.6" fill="none" stroke="#1a40c0" stroke-width="1"/></svg>
<div class="t" style="left:37.80px;top:245.18px;font-size:9.0px;transform:scaleX(0.8889);transform-origin:left top;">Точка:3</div>
<div class="a" style="left:12px;top:263.0px;width:9px;height:1px;background:repeating-linear-gradient(90deg,#a8acb0 0 1px,transparent 1px 2px)"></div>
<svg class="a" style="left:22px;top:258px" width="12" height="12" viewBox="0 0 12 12"><path d="M0.5,5 L7,0.5 L11.5,6 L5,11.5 Z" fill="#2a90f0" stroke="#1a50c0" stroke-width="0.6"/><path d="M2,4 L8,10 M4,2.5 L10,8 M6,1.5 L11,6 M2,7 L8,2 M3.5,9 L10,3.5" stroke="#a0d8ff" stroke-width="0.6"/></svg>
<div class="t" style="left:37.80px;top:259.38px;font-size:9.0px;transform:scaleX(0.8889);transform-origin:left top;">Поверхность по сети кр</div>
<div class="a" style="left:12px;top:277.2px;width:9px;height:1px;background:repeating-linear-gradient(90deg,#a8acb0 0 1px,transparent 1px 2px)"></div>
<svg class="a" style="left:22px;top:272px" width="12" height="12" viewBox="0 0 12 12"><path d="M0.5,5 L7,0.5 L11.5,6 L5,11.5 Z" fill="#2a90f0" stroke="#1a50c0" stroke-width="0.6"/><path d="M2,4 L8,10 M4,2.5 L10,8 M6,1.5 L11,6 M2,7 L8,2 M3.5,9 L10,3.5" stroke="#a0d8ff" stroke-width="0.6"/></svg>
<div class="t" style="left:37.80px;top:273.58px;font-size:9.0px;transform:scaleX(0.8889);transform-origin:left top;">Поверхность по сети кр</div>
<div class="a" style="left:12px;top:291.4px;width:9px;height:1px;background:repeating-linear-gradient(90deg,#a8acb0 0 1px,transparent 1px 2px)"></div>
<svg class="a" style="left:22px;top:286px" width="12" height="12" viewBox="0 0 12 12"><path d="M0.5,5 L7,0.5 L11.5,6 L5,11.5 Z" fill="#2a90f0" stroke="#1a50c0" stroke-width="0.6"/><path d="M2,4 L8,10 M4,2.5 L10,8 M6,1.5 L11,6 M2,7 L8,2 M3.5,9 L10,3.5" stroke="#a0d8ff" stroke-width="0.6"/></svg>
<div class="t" style="left:37.80px;top:287.78px;font-size:9.0px;transform:scaleX(0.8889);transform-origin:left top;">Поверхность по сети кр</div>
<div class="a" style="left:12px;top:305.6px;width:9px;height:1px;background:repeating-linear-gradient(90deg,#a8acb0 0 1px,transparent 1px 2px)"></div>
<svg class="a" style="left:22px;top:301px" width="12" height="12" viewBox="0 0 12 12"><path d="M1,2 V11 M2.5,2 V11" stroke="#333" stroke-width="0.9"/><path d="M4,2 L11,0.5 V11.5 H4 Z" fill="#1a70e0" stroke="#1a2a70" stroke-width="0.8"/><path d="M5,9 L7,4 L8,8 L10,3" stroke="#fff" fill="none" stroke-width="0.9"/></svg>
<div class="t" style="left:37.80px;top:301.98px;font-size:9.0px;transform:scaleX(0.8889);transform-origin:left top;">Сшивка поверхностей:9</div>
<div class="a" style="left:12px;top:319.8px;width:9px;height:1px;background:repeating-linear-gradient(90deg,#a8acb0 0 1px,transparent 1px 2px)"></div>
<svg class="a" style="left:22px;top:315px" width="12" height="12" viewBox="0 0 12 12"><path d="M1,1.5 H5.5 V5 H10.5 V10.5 H1 Z" fill="#a8d4e8" stroke="#1a3ab0" stroke-width="1"/><g fill="#1a2a90"><rect x="0" y="0.5" width="2" height="2"/><rect x="4.5" y="0.5" width="2" height="2"/><rect x="4.5" y="4" width="2" height="2"/><rect x="9.5" y="4" width="2" height="2"/><rect x="0" y="9.5" width="2" height="2"/><rect x="9.5" y="9.5" width="2" height="2"/></g></svg>
<div class="t" style="left:37.80px;top:316.18px;font-size:9.0px;transform:scaleX(0.8889);transform-origin:left top;">(-) Эскиз:14</div>
<div class="a" style="left:12px;top:334.0px;width:9px;height:1px;background:repeating-linear-gradient(90deg,#a8acb0 0 1px,transparent 1px 2px)"></div>
<svg class="a" style="left:22px;top:329px" width="12" height="12" viewBox="0 0 12 12"><path d="M1,3 L10,1 L11,9 L2,11 Z" fill="#20d020" stroke="#107010" stroke-width="0.8"/><path d="M1,6 L11,5 M5,0 L6,12" stroke="#107010" stroke-width="0.8"/></svg>
<div class="t" style="left:37.80px;top:330.38px;font-size:9.0px;font-weight:700;transform:scaleX(0.8889);transform-origin:left top;">Плоскость под углом</div>
</div>
<div class="a" style="left:147.5px;top:125px;width:10px;height:341px;background:#eee9d9"></div>
<div class="a" style="left:147.5px;top:127px;width:10px;height:10.5px;background:#c9dcf3"></div>
<svg class="a" style="left:149px;top:129px" width="7" height="5" viewBox="0 0 7 5"><path d="M0.5,4.5 L3.5,1 L6.5,4.5" stroke="#3a4468" stroke-width="1.4" fill="none"/></svg>
<div class="a" style="left:147.5px;top:363px;width:10px;height:86px;background:linear-gradient(90deg,#d3e3f7,#bcd2ee);border-radius:2px"></div>
<div class="a" style="left:147.5px;top:454.5px;width:10px;height:10.5px;background:#c9dcf3"></div>
<svg class="a" style="left:149px;top:457px" width="7" height="5" viewBox="0 0 7 5"><path d="M0.5,0.5 L3.5,4 L6.5,0.5" stroke="#3a4468" stroke-width="1.4" fill="none"/></svg>
<div class="a" style="left:24px;top:466.5px;width:134px;height:11px;background:#eee9d9"></div>
<div class="a" style="left:26.4px;top:467px;width:9px;height:10.5px;background:#c9dcf3"></div>
<svg class="a" style="left:29px;top:469px" width="5" height="7" viewBox="0 0 5 7"><path d="M4.5,0.5 L1,3.5 L4.5,6.5" stroke="#3a4468" stroke-width="1.4" fill="none"/></svg>
<div class="a" style="left:38px;top:467px;width:49px;height:10.5px;background:linear-gradient(#d3e3f7,#bcd2ee);border-radius:2px"></div>
<div class="a" style="left:135.5px;top:467px;width:9.5px;height:10.5px;background:#c9dcf3"></div>
<svg class="a" style="left:138px;top:469px" width="5" height="7" viewBox="0 0 5 7"><path d="M0.5,0.5 L4,3.5 L0.5,6.5" stroke="#3a4468" stroke-width="1.4" fill="none"/></svg>
<div class="a" style="left:21px;top:479.5px;width:141px;height:150px;background:#f0f3f7;border:2px solid #e9e3c9;border-top:1px solid #9ea2a8"></div>
<svg class="a" style="left:28px;top:481px" width="12" height="12" viewBox="0 0 12 12"><path d="M1,3 L10,1 L11,9 L2,11 Z" fill="#20d020" stroke="#107010" stroke-width="0.8"/><path d="M1,6 L11,5 M5,0 L6,12" stroke="#107010" stroke-width="0.8"/></svg>
<div class="t" style="left:44.90px;top:481.28px;font-size:9.0px;font-weight:700;transform:scaleX(0.9314);transform-origin:left top;">Плоскость под углом:2</div>
<div class="a" style="left:35px;top:505px;width:1px;height:13px;background:repeating-linear-gradient(#a8acb0 0 1px,transparent 1px 2px)"></div>
<div class="a" style="left:36px;top:514px;width:8px;height:1px;background:repeating-linear-gradient(90deg,#a8acb0 0 1px,transparent 1px 2px)"></div>
<div class="a" style="left:31.5px;top:497px;width:7px;height:7px;border:1px solid #8a9aae;background:#fff"></div><div class="a" style="left:33px;top:500px;width:4px;height:1px;background:#222"></div><div class="a" style="left:34.5px;top:498.5px;width:1px;height:4px;background:#222"></div>
<svg class="a" style="left:45px;top:495px" width="12" height="11" viewBox="0 0 12 11"><path d="M0.5,2 H4.5 L5.5,3 H11.5 V10.5 H0.5 Z" fill="#f4cf6a" stroke="#c89a30"/><path d="M0.5,4.5 H11.5" stroke="#fff2c0"/></svg>
<div class="t" style="left:60.70px;top:496.18px;font-size:9.0px;transform:scaleX(0.8844);transform-origin:left top;">Исходные объекты</div>
<svg class="a" style="left:45px;top:509px" width="12" height="11" viewBox="0 0 12 11"><path d="M0.5,2 H4.5 L5.5,3 H11.5 V10.5 H0.5 Z" fill="#f4cf6a" stroke="#c89a30"/><path d="M0.5,4.5 H11.5" stroke="#fff2c0"/></svg>
<div class="t" style="left:60.70px;top:510.28px;font-size:9.0px;transform:scaleX(0.8842);transform-origin:left top;">Производные объекты</div>
<div class="a" style="left:23.5px;top:629.5px;width:49px;height:12px;background:#f6f7f9;border:1px solid #d8dbe0;border-top:none"></div>
<div class="t" style="left:25.50px;top:632.68px;font-size:9.0px;color:#333;transform:scaleX(0.8980);transform-origin:left top;">Построение</div>
<div class="t" style="left:77.30px;top:632.68px;font-size:9.0px;color:#333;transform:scaleX(0.8493);transform-origin:left top;">Исполнения</div>
<div class="t" style="left:129.80px;top:632.68px;font-size:9.0px;color:#333;transform:scaleX(0.8318);transform-origin:left top;">Зоны</div>
<div class="a" style="left:166px;top:91px;width:743px;height:554px;background:#f3de8a"></div>
<div id="vp" class="a"></div>
<div class="a" style="left:166px;top:91px;width:740px;height:1px;background:#72808e"></div>
<svg class="a" style="left:0;top:0" width="910" height="709" viewBox="0 0 910 709">
<defs>
<radialGradient id="bulb" cx="728" cy="282" r="62" fx="726" fy="284" gradientUnits="userSpaceOnUse"><stop offset="0" stop-color="#48dcff"/><stop offset="0.25" stop-color="#18aaf8"/><stop offset="0.55" stop-color="#0a6ed4"/><stop offset="0.8" stop-color="#0a48a8"/><stop offset="1" stop-color="#0a3e98"/></radialGradient>
<linearGradient id="bowsh" x1="0" y1="0" x2="1" y2="0"><stop offset="0" stop-color="#1a78e0"/><stop offset="1" stop-color="#0c5cbc"/></linearGradient>
<radialGradient id="bowdark" cx="300" cy="470" r="150" gradientUnits="userSpaceOnUse"><stop offset="0" stop-color="#0a50b0" stop-opacity="0.6"/><stop offset="0.45" stop-color="#0a66cc" stop-opacity="0.3"/><stop offset="1" stop-color="#0a80e0" stop-opacity="0"/></radialGradient>
</defs>
<!-- hull silhouette (dark) -->
<path fill="#0652aa" d="M341.5,330 L693.1,127 L741.5,155 L741,185.5 L745.5,208 L821.2,250.6 L838.7,211 L887,238.5 L856,294.5 L780,336 L700,380 C687.3,387.0 640.7,412.5 624.0,422.0 C607.3,431.5 608.7,432.3 600.0,437.0 C591.3,441.7 581.0,445.6 571.9,450.2 C562.8,454.8 554.3,459.6 545.5,464.3 C536.7,469.0 527.9,474.0 519.1,478.4 C510.3,482.8 501.5,486.6 492.7,490.7 C483.9,494.8 475.2,499.8 466.4,503.0 C457.6,506.2 451.1,508.1 440.0,510.0 C428.9,511.9 418.3,512.8 400.0,514.7 C381.7,516.6 341.7,520.2 330.0,521.3 C327.2,521.5 317.6,522.6 313.2,522.3 C308.8,521.9 306.7,521.0 303.9,519.2 C301.1,517.4 298.5,514.3 296.2,511.5 C293.9,508.7 292.6,505.6 290.0,502.2 C287.4,498.8 283.6,494.7 280.7,491.3 C277.8,487.9 275.2,485.6 272.9,482.0 C270.6,478.4 268.5,473.2 266.7,469.6 C264.9,466.0 263.8,463.9 262.0,460.3 C260.2,456.7 257.6,452.9 255.9,447.9 C254.2,442.8 251.6,436.1 251.5,430.0 C251.4,423.9 252.8,418.1 255.5,411.3 C258.2,404.5 262.3,396.4 267.6,389.3 C272.9,382.2 279.3,375.3 287.4,368.5 C295.5,361.7 307.0,355.1 316.0,348.7 C325.0,342.3 337.2,333.1 341.5,330.0 Z"/>
<!-- interior light blue -->
<path fill="#079ff4" d="M887,238.5 L535.5,442.3 C530.5,444.9 515.6,453.1 505.3,458.2 C494.9,463.2 486.7,467.6 473.4,472.6 C460.1,477.7 441.5,484.8 425.6,488.5 C409.7,492.2 391.2,494.2 377.8,494.9 C364.4,495.6 352.9,493.5 345.0,492.9 C337.1,492.3 336.6,492.6 330.3,491.3 C324.0,490.0 314.8,487.4 307.0,485.1 C299.2,482.8 291.3,481.5 283.8,477.4 C276.3,473.3 265.6,463.1 262.0,460.3 L264.3,470 C264.5,467.9 264.3,462.2 265.4,457.5 C266.5,452.8 268.0,447.1 270.9,442.0 C273.8,436.9 278.1,431.8 283.0,426.7 C287.9,421.6 293.9,416.1 300.5,411.3 C307.1,406.5 314.4,402.2 322.5,398.0 C330.6,393.8 340.6,390.0 349.0,386.0 C357.4,382.0 363.9,378.6 373.0,374.0 C382.1,369.4 396.0,362.6 403.8,358.6 C411.6,354.6 412.3,353.9 420.0,350.0 C427.7,346.1 445.0,337.8 450.0,335.3 L686.5,215.4 L685.7,192.1 L724.5,213.9 L745.5,208 L821.2,250.6 L838.7,211 Z"/>
<path fill="url(#bowdark)" d="M887,238.5 L535.5,442.3 C530.5,444.9 515.6,453.1 505.3,458.2 C494.9,463.2 486.7,467.6 473.4,472.6 C460.1,477.7 441.5,484.8 425.6,488.5 C409.7,492.2 391.2,494.2 377.8,494.9 C364.4,495.6 352.9,493.5 345.0,492.9 C337.1,492.3 336.6,492.6 330.3,491.3 C324.0,490.0 314.8,487.4 307.0,485.1 C299.2,482.8 291.3,481.5 283.8,477.4 C276.3,473.3 265.6,463.1 262.0,460.3 L264.3,470 C264.5,467.9 264.3,462.2 265.4,457.5 C266.5,452.8 268.0,447.1 270.9,442.0 C273.8,436.9 278.1,431.8 283.0,426.7 C287.9,421.6 293.9,416.1 300.5,411.3 C307.1,406.5 314.4,402.2 322.5,398.0 C330.6,393.8 340.6,390.0 349.0,386.0 C357.4,382.0 363.9,378.6 373.0,374.0 C382.1,369.4 396.0,362.6 403.8,358.6 C411.6,354.6 412.3,353.9 420.0,350.0 C427.7,346.1 445.0,337.8 450.0,335.3 L686.5,215.4 L685.7,192.1 L724.5,213.9 L745.5,208 L821.2,250.6 L838.7,211 Z"/>
<!-- lighter strip near lower rim -->
<path fill="#02a9fc" d="M887,238.5 L535.5,442.3 C520,452 505,458 495,464 C480,470 460,478 440,485 C420,490 400,494 378,495 C370,495 360,495 352,494.5 C365,500 378,496 390,490 C470,445 560,390 620,355.8 L712.5,302.2 L773,267 L830,235 L838.7,211 Z"/>
<!-- rim lighter band along upper interior edge -->
<path fill="none" stroke="#16acff" stroke-width="2.6" d="M266.5,471.2 C266.7,469.1 266.5,463.4 267.6,458.7 C268.7,454.0 270.2,448.3 273.1,443.2 C276.0,438.1 280.3,433.0 285.2,427.9 C290.1,422.8 296.1,417.3 302.7,412.5 C309.3,407.7 316.6,403.4 324.7,399.2 C332.8,395.0 342.8,391.2 351.2,387.2 C359.6,383.2 366.1,379.8 375.2,375.2 C384.3,370.6 398.2,363.8 406.0,359.8 C413.8,355.8 414.5,355.1 422.2,351.2 C429.9,347.3 447.2,338.9 452.2,336.5 L689,217"/>
<!-- bow inner shadow region below ellipse -->
<path fill="url(#bowsh)" d="M262,460 C275,470 290,478 307,485 C330,492 355,495 378,495 C398,494 412,492 425,488 L345,511 L287,497.5 L276,486 C270,478 265,470 262,460 Z"/>
<path fill="#1a80e6" d="M262,460 C268,468 276,474 284,477 L284,497 L276,486 C270,478 265,470 262,460 Z"/>
<!-- transom light triangle -->
<path fill="#079ff4" d="M693.1,127 L741.5,155 L699.6,181.3 Z"/>
<!-- gray notch -->
<path fill="#96918f" d="M741,185.5 L745,184 L826,224 L792.4,234.2 L745.5,208 L741,206 Z"/>
<!-- plane tint above notch -->

<!-- dark wedge & shadow -->
<path fill="#0652aa" d="M765.9,271 L768.9,255.7 L776.8,245.8 L792.4,234.2 L832,215 L838.7,211 L821.2,250.6 L798.6,258 L780.8,268 Z"/>
<!-- bulb -->
<path fill="url(#bulb)" d="M712.5,302.2 C708,294 710,280 716.5,272.5 C722,265 735,256 753,247.8 C760,245 766,244 770,248 C785,252 795,258 798.6,269.6 C790,277 785,281 780.8,283.4 C770,290 762,294 759,295.3 C750,299 745,300 739.2,301.2 Z"/>
<path fill="none" stroke="#2a3ae0" stroke-width="1" d="M712.5,302.2 C708,294 710,280 716.5,272.5 C722,265 735,256 753,247.8 M712.5,302.2 L739.2,301.2 C750,299 762,294 780.8,283.4 C790,277 795,273 798.6,269.6"/>
<!-- deck lines -->
<g fill="none" stroke-width="1">
<path stroke="#3ae4ff" d="M256.6,459.7 L790.8,151.4 L844,184.4 L310,491.3 Z"/>
<path stroke="#a080b8" d="M287,497.5 L345,472.7 L390,451 L620,335.6 L760.6,260 L830,223"/>
<path stroke="#a040f0" d="M311,522 C340,510 370,500 390,490 C470,445 560,390 620,355.8 L712.5,302.2 L773,267 L822,240"/>
<path stroke="#e030e8" stroke-width="1.1" d="M693.1,127 L741.5,155 M838.7,211 L887,238.5 M535.5,442.3 C530.5,444.9 515.6,453.1 505.3,458.2 C494.9,463.2 486.7,467.6 473.4,472.6 C460.1,477.7 441.5,484.8 425.6,488.5 C409.7,492.2 391.2,494.2 377.8,494.9 C364.4,495.6 352.9,493.5 345.0,492.9 C337.1,492.3 336.6,492.6 330.3,491.3 C324.0,490.0 314.8,487.4 307.0,485.1 C299.2,482.8 291.3,481.5 283.8,477.4 C276.3,473.3 265.6,463.1 262.0,460.3 C261.0,458.2 257.6,452.9 255.9,447.9 C254.2,442.8 251.6,436.1 251.5,430.0 C251.4,423.9 252.8,418.1 255.5,411.3 C258.2,404.5 262.3,396.4 267.6,389.3 C272.9,382.2 279.3,375.3 287.4,368.5 C295.5,361.7 307.0,355.1 316.0,348.7 C325.0,342.3 337.2,333.1 341.5,330.0"/>
<path stroke="#d030e8" stroke-width="1.1" d="M262.0,460.3 C262.8,461.9 264.9,466.0 266.7,469.6 C268.5,473.2 270.6,478.4 272.9,482.0 C275.2,485.6 277.8,487.9 280.7,491.3 C283.6,494.7 287.4,498.8 290.0,502.2 C292.6,505.6 293.9,508.7 296.2,511.5 C298.5,514.3 301.1,517.4 303.9,519.2 C306.7,521.0 308.8,521.9 313.2,522.3 C317.6,522.6 327.2,521.5 330.0,521.3"/>
<path stroke="#3040f0" d="M741.5,155 L838.7,211"/>
<path stroke="#ff20f0" stroke-width="1.6" d="M743.9,155 L745.5,208 L821.2,250.6 L838.7,211 M744.7,184.7 L828.5,234.2"/>
</g>
<!-- cyan planes -->
<g fill="none" stroke="#30e8f8" stroke-width="1">
<path d="M698.5,94.9 L676.5,238 L871.3,350.2 L893.5,207.5 Z"/>
<path d="M794.6,154 L842.7,180"/>
</g>
<!-- sketch rectangles near stern -->
<g fill="none" stroke-width="1">
<path stroke="#d89080" d="M764,242 L817,213 L817,275 L764,304 Z"/>
<path stroke="#a8d830" d="M737.4,257.4 L790,229 L844,257.4 L790,287 Z"/>
<path stroke="#3a90e0" d="M817,213 L817,300 L790,285"/>
<path stroke="#c040f0" d="M757,243.8 C760,238 766,237 772,240 C785,247 795,258 798.6,269.6"/><path stroke="#e040f0" d="M753,243 L760,250 M760,243 L753,250 M756.5,241.5 V251.5 M777,241 L785,249 M785,241 L777,249 M781,239.5 V250.5 M797,270 L805,277 M805,270 L797,277 M801,268.5 V278.5"/><path stroke="#b0a080" d="M774,251 L784,258 M779,249 V261"/>
</g>
<!-- green plane -->
<g fill="none" stroke="#30ec30" stroke-width="1.2">
<path d="M341.5,330 L536,443 L663,624 L469,512 Z"/>
</g>
<!-- small sketch axes -->
<g fill="none" stroke="#22e03a" stroke-width="1.2">
<path d="M470.3,432 L463.5,421 M470.3,432 L489,442 M470.3,432 L455,450.7"/>
</g>
<text x="458.5" y="420" font-size="10" fill="#22e03a" font-family="Liberation Sans">Y</text>
<text x="488" y="441" font-size="10" fill="#22e03a" font-family="Liberation Sans">X</text>
<text x="451" y="450" font-size="10" fill="#22e03a" font-family="Liberation Sans">Z</text>
<g>
<rect x="339" y="327.5" width="5" height="5" fill="#40302a"/>
<rect x="436" y="383.5" width="5" height="5" fill="#c03838"/>
<rect x="403" y="418.5" width="5" height="5" fill="#c03838"/>
<rect x="533.5" y="440.5" width="5" height="5" fill="#c89070"/>
<rect x="466.5" y="509.5" width="5" height="5" fill="#6a2830"/>
<rect x="500" y="475" width="5" height="5" fill="#d09050"/>
<rect x="597.5" y="530.5" width="5" height="5" fill="#6a2830"/>
<rect x="563.5" y="565.5" width="5" height="5" fill="#6a2830"/>
<rect x="660.5" y="621.5" width="5" height="5" fill="#6a2830"/>
</g>
<!-- arrow -->
<g stroke="#111" stroke-width="1.6" fill="none">
<path d="M211,67 L332,316 M211,67 L218,103 M211,67 L237,92"/>
</g>
</svg>

<div class="t" style="left:190.50px;top:310.55px;font-size:11.4px;color:#1e1e1e;">Выделяем указателем</div>
<div class="t" style="left:190.50px;top:323.75px;font-size:11.4px;color:#1e1e1e;transform:scaleX(0.9890);transform-origin:left top;">плоскость и жмем Эскиз.</div>
<svg class="a" style="left:170px;top:545px" width="90" height="75" viewBox="0 0 90 75"><path d="M46.5,23 V47" stroke="#46c046" stroke-width="2.4"/><path d="M46.5,17 L43,27 H50 Z" fill="#46c046"/><path d="M46.5,47 L66,59" stroke="#e46060" stroke-width="2.4"/><path d="M71,62.5 L60.5,61.5 L65,54 Z" fill="#e46060"/><path d="M46.5,47 L26,58" stroke="#5c8ee6" stroke-width="2.4"/><path d="M20.5,60.5 L31,60 L27,52.5 Z" fill="#5c8ee6"/><circle cx="46.5" cy="47" r="4.5" fill="#5a5ae0"/><text x="43.5" y="15" font-size="8" fill="#46c046" font-family="Liberation Serif">Y</text><text x="74" y="69" font-size="8" fill="#e46060" font-family="Liberation Serif">X</text><text x="10.5" y="69" font-size="8" fill="#5c8ee6" font-family="Liberation Serif">Z</text></svg>
<div class="a" style="left:20px;top:652px;width:2px;height:36px;background:repeating-linear-gradient(#9aa0a8 0 1px,transparent 1px 3px)"></div>
<div id="cmd" class="a"></div>
<div id="status" class="a"></div>
<div class="t" style="left:3.50px;top:697.38px;font-size:9.0px;color:#333;transform:scaleX(0.8916);transform-origin:left top;">Включить/выключить режим эскиза</div>
<div class="a" style="left:848px;top:696px;width:1px;height:11px;background:#b0b4ba"></div>
<svg class="a" style="left:838px;top:695px" width="72" height="13" viewBox="0 0 72 13"><text x="3" y="10.5" font-size="10.2" font-weight="700" font-family="Liberation Sans" fill="#fff" stroke="#000" stroke-width="2.2" paint-order="stroke" textLength="66" lengthAdjust="spacingAndGlyphs">www.tugun.ru</text></svg>
<div class="a" style="left:0;top:707px;width:910px;height:2px;background:#2a6ad8"></div><div class="a" style="left:0;top:707px;width:65px;height:2px;background:#3aa040"></div>
</body></html>
